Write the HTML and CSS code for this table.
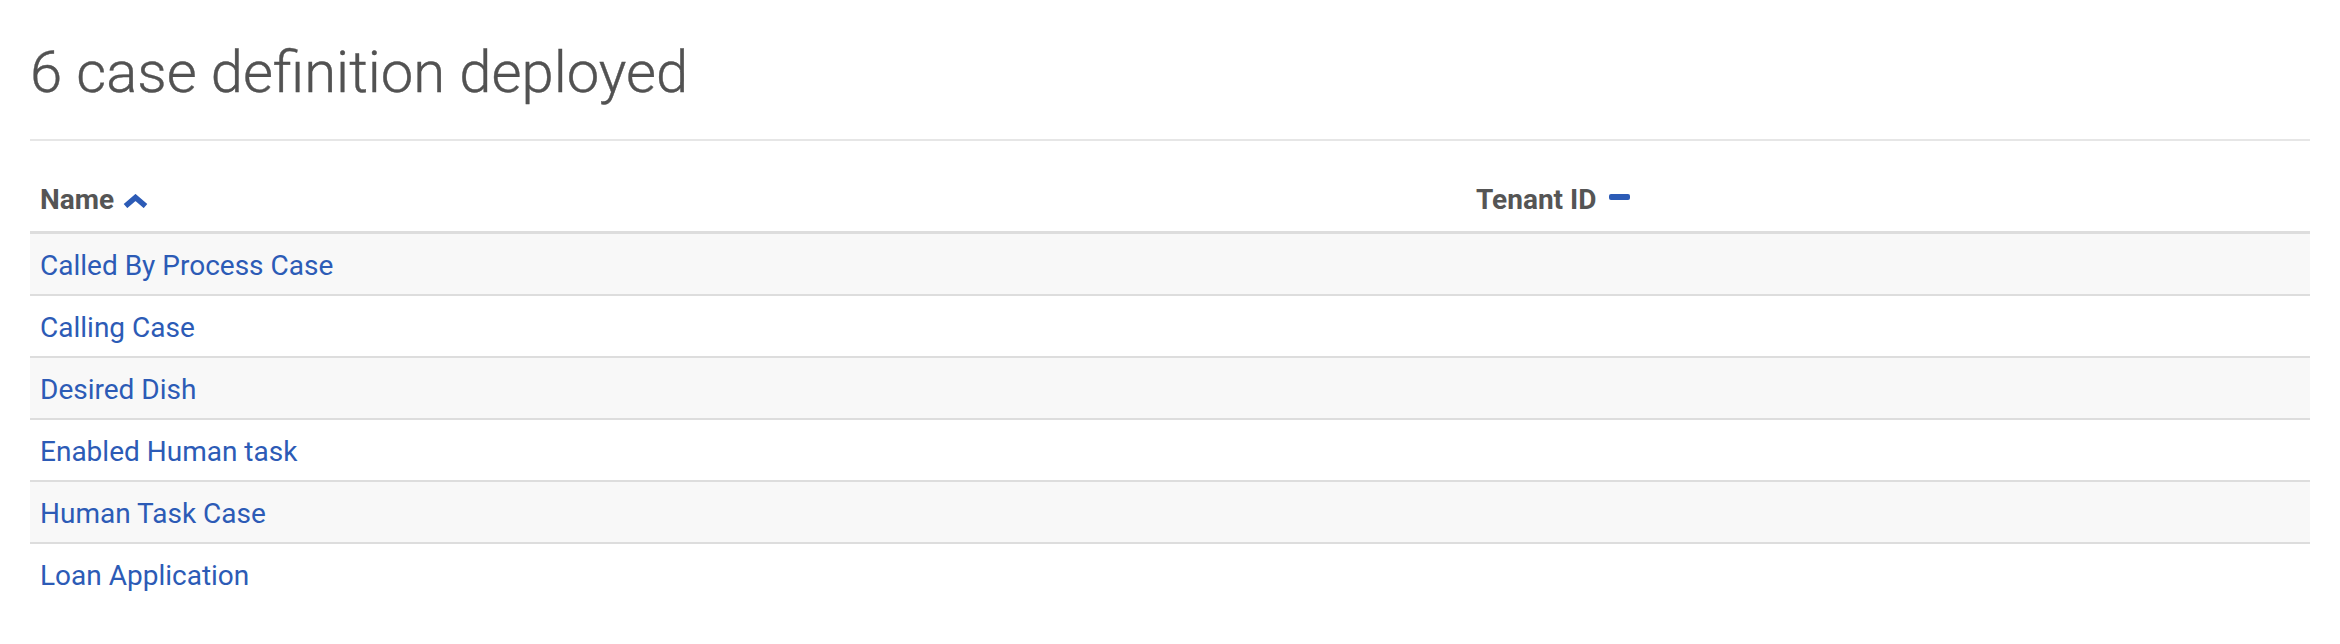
FILE: index.html
```html
<!DOCTYPE html>
<html>
<head>
<meta charset="utf-8">
<link rel="stylesheet" href="styles.css">
<title>Case definitions</title>
</head>
<body>
<div class="page">
  <div class="title-bar">
    <h1>6 case definition deployed</h1>
  </div>
  <table class="defs">
    <thead>
      <tr>
        <th class="col-name">Name
          <svg class="sort-up" width="25" height="14" viewBox="0 0 25 14"><polyline points="2.5,12 12.5,3.5 22.5,12" fill="none" stroke="#2c5bb6" stroke-width="5.5"/></svg>
        </th>
        <th>Tenant ID <span class="sort-none"></span></th>
      </tr>
    </thead>
    <tbody>
      <tr><td><a href="#">Called By Process Case</a></td><td></td></tr>
      <tr><td><a href="#">Calling Case</a></td><td></td></tr>
      <tr><td><a href="#">Desired Dish</a></td><td></td></tr>
      <tr><td><a href="#">Enabled Human task</a></td><td></td></tr>
      <tr><td><a href="#">Human Task Case</a></td><td></td></tr>
      <tr><td><a href="#">Loan Application</a></td><td></td></tr>
    </tbody>
  </table>
</div>
</body>
</html>
```

FILE: styles.css
```css
body {
	margin: 0;
	background-color: #ffffff;
	font-family: Roboto, "Liberation Sans", sans-serif;
	color: #555555;
}
.page {
	padding: 0 30px;
}
.title-bar {
	padding-top: 38px;
	padding-bottom: 33px;
	border-bottom: 2px solid #e6e6e6;
}
h1 {
	margin: 0;
	font-size: 58px;
	line-height: 68px;
	font-weight: 300;
	color: #525252;
	-webkit-text-stroke: 0.4px #525252;
}
.defs {
	width: 100%;
	margin-top: 29px;
	border-collapse: separate;
	border-spacing: 0;
	font-size: 28px;
	line-height: 42px;
}
.defs th {
	text-align: left;
	font-weight: 700;
	color: #555555;
	padding: 9px 10px 10px 10px;
	border-bottom: 3px solid #dddddd;
	white-space: nowrap;
}
.defs th.col-name {
	width: 1416px;
}
.sort-up {
	margin-left: 2px;
	vertical-align: 1px;
}
.sort-none {
	display: inline-block;
	width: 21px;
	height: 6px;
	border-radius: 2px;
	background-color: #2c5bb6;
	margin-left: 6px;
	vertical-align: 9px;
}
.defs td {
	padding: 11px 10px 7px 10px;
	border-bottom: 2px solid #dddddd;
}
.defs tbody tr:nth-child(odd) td {
	background-color: #f8f8f8;
}
.defs tbody tr:last-child td {
	border-bottom: none;
}
.defs a {
	color: #2c5bb6;
	text-decoration: none;
}
```
